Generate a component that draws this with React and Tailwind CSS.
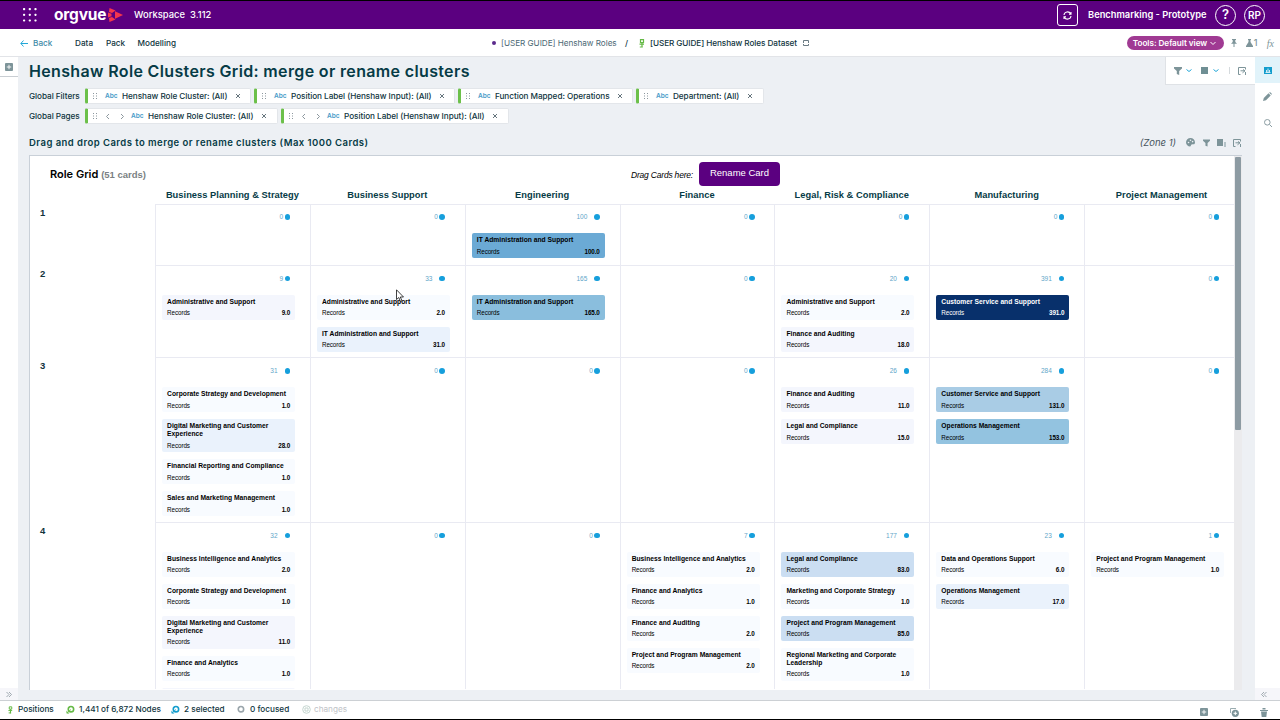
import React from "react";

const P = {
  0: "bg-[#f8fbff]",
  1: "bg-[#f4f6fd]",
  2: "bg-[#eaf2fc]",
  3: "bg-[#cbdef2]",
  4: "bg-[#a9cce5]",
  5: "bg-[#93c3e0]",
  6: "bg-[#8abedd]",
  7: "bg-[#6baad5]",
  8: "bg-[#08306b] text-white",
};

const columns = ["Business Planning & Strategy", "Business Support", "Engineering", "Finance", "Legal, Risk & Compliance", "Manufacturing", "Project Management"];

const rows = [
  {
    id: "1", h: "h-[60.5px]", pad: "pt-[28px]",
    cells: [["0"], ["0"], ["100", ["IT Administration and Support", "100.0", 7]], ["0"], ["0"], ["0"], ["0"]],
  },
  {
    id: "2", h: "h-[92.5px]", pad: "pt-[29px]",
    cells: [
      ["9", ["Administrative and Support", "9.0", 1]],
      ["33", ["Administrative and Support", "2.0", 0], ["IT Administration and Support", "31.0", 2]],
      ["165", ["IT Administration and Support", "165.0", 6]],
      ["0"],
      ["20", ["Administrative and Support", "2.0", 0], ["Finance and Auditing", "18.0", 1]],
      ["391", ["Customer Service and Support", "391.0", 8]],
      ["0"],
    ],
  },
  {
    id: "3", h: "h-[164.5px]", pad: "pt-[29px]",
    cells: [
      ["31", ["Corporate Strategy and Development", "1.0", 0], ["Digital Marketing and Customer Experience", "28.0", 2], ["Financial Reporting and Compliance", "1.0", 0], ["Sales and Marketing Management", "1.0", 0]],
      ["0"], ["0"], ["0"],
      ["26", ["Finance and Auditing", "11.0", 1], ["Legal and Compliance", "15.0", 1]],
      ["284", ["Customer Service and Support", "131.0", 4], ["Operations Management", "153.0", 5]],
      ["0"],
    ],
  },
  {
    id: "4", h: "h-[167.5px]", pad: "pt-[29px]",
    cells: [
      ["32", ["Business Intelligence and Analytics", "2.0", 0], ["Corporate Strategy and Development", "1.0", 0], ["Digital Marketing and Customer Experience", "11.0", 1], ["Finance and Analytics", "1.0", 0], null],
      ["0"], ["0"],
      ["7", ["Business Intelligence and Analytics", "2.0", 0], ["Finance and Analytics", "1.0", 0], ["Finance and Auditing", "2.0", 0], ["Project and Program Management", "2.0", 0]],
      ["177", ["Legal and Compliance", "83.0", 3], ["Marketing and Corporate Strategy", "1.0", 0], ["Project and Program Management", "85.0", 3], ["Regional Marketing and Corporate Leadership", "1.0", 0]],
      ["23", ["Data and Operations Support", "6.0", 0], ["Operations Management", "17.0", 2]],
      ["1", ["Project and Program Management", "1.0", 0]],
    ],
  },
];

function Card({ data }) {
  if (!data) return <div className="h-[25px] w-[133px] rounded-[2px] bg-[#f4f6fd]" />;
  const [title, value, tone] = data;
  return (
    <div className={`mb-[7px] w-[133px] shrink-0 rounded-[2px] px-[5px] pt-[3px] pb-[3px] text-[6.7px] leading-[8px] ${P[tone]}`}>
      <div className="w-[124px] font-bold tracking-[0.02px]">{title}</div>
      <div className="mt-[4px] flex h-[7px] items-center justify-between text-[6.300px]">
        <span className="tracking-[-0.1px]">Records</span>
        <span className="font-bold tracking-[-0.1px]">{value}</span>
      </div>
    </div>
  );
}

function Cell({ data: [count, ...cards], pad }) {
  return (
    <div className={`w-[154.85px] shrink-0 overflow-hidden border-t border-l border-[#e9eaf2] pl-[6.1px] ${pad} h-full`}>
      <div className="-mt-[22px] mb-[10px] flex h-[12px] w-[128px] items-center justify-end text-[6.5px] text-[#5fa6c9]">
        <span className={count.length > 1 ? "mr-[7px]" : "mr-[1.5px]"}>{count}</span>
        <span className="h-[5.5px] w-[5.5px] rounded-full bg-[#169fdc]" />
      </div>
      {cards.map((c, i) => <Card key={i} data={c} />)}
    </div>
  );
}

const Dots = () => (
  <svg className="h-[6px] w-[4px] shrink-0" viewBox="0 0 4 6" fill="#8c979e">
    <path d="M0 0h1v1H0zM3 0h1v1H3zM0 2.4h1v1H0zM3 2.4h1v1H3zM0 5h1v1H0zM3 5h1v1H3z" />
  </svg>
);
const Close = () => (
  <svg className="h-[4px] w-[4px] shrink-0" viewBox="0 0 4 4" stroke="#66757d" strokeWidth="1"><path d="M0 0l4 4M4 0L0 4" /></svg>
);
const Chev = ({ d, c = "#8c979e" }) => (
  <svg className="h-[5px] w-[6px] shrink-0" viewBox="0 0 6 5" fill="none" stroke={c} strokeWidth="1"><path d={d} /></svg>
);

function Chip({ w, label, labelW, pager, gap = "ml-[8px]" }) {
  return (
    <div className={`flex h-[16px] shrink-0 items-center rounded-[2px] border-y border-r border-l-[3px] border-[#e3e6ea] border-l-[#6cc04a] bg-white pl-[5px] ${w}`}>
      <Dots />
      {pager && <span className="ml-[8px] flex w-[20px] justify-between"><Chev d="M4 0L1.5 2.5L4 5" /><Chev d="M2 0L4.500 2.500L2 5" /></span>}
      <span className={`${pager ? "ml-[6px]" : "ml-[8px]"} w-[12px] pt-px text-[6.5px] font-semibold text-[#4a9cc9]`}>Abc</span>
      <span className={`ml-[5px] text-[8.2px] font-medium tracking-[-0.05px] whitespace-nowrap text-[#0f3540] ${labelW}`}>{label}</span>
      <span className={gap}><Close /></span>
    </div>
  );
}

const Funnel = ({ c = "h-[8px] w-[8px]" }) => (
  <svg className={`shrink-0 ${c}`} viewBox="0 0 8 8" fill="#7d9499"><path d="M0 0h8v1.500L5.200 4v4L2.800 7V4L0 1.500z" /></svg>
);
const Export = () => (
  <svg className="h-[8px] w-[8px] shrink-0" viewBox="0 0 8 8" fill="none" stroke="#7d9499" strokeWidth="1"><path d="M7.500 2.500V.5h-7v7h2M2.500 3.800h4.500M5 2.500l2 1.300-2.500 2M7.500 5v3" /></svg>
);
const PlusBox = ({ s = "h-[9px] w-[9px]" }) => (
  <svg className={`shrink-0 ${s}`} viewBox="0 0 9 9"><rect width="9" height="9" rx="1" fill="#7d9499" /><path d="M4.500 2v5M2 4.500h5" stroke="#fff" /></svg>
);
const Ring = ({ c, arrow = true }) => (
  <svg className="h-[9px] w-[9px] shrink-0" viewBox="0 0 10 10" fill="none" stroke={c}>
    <circle cx="5.500" cy="4.700" r="3" strokeWidth="1.800" />
    {arrow && <path d="M1 9l4.500-4M1 6.500V9h2.500" strokeWidth="1" />}
  </svg>
);
const Person = ({ c = "h-[9px] w-[6px]" }) => (
  <svg className={`shrink-0 ${c}`} viewBox="0 0 6 9" fill="none" stroke="#65b946" strokeWidth="1.200"><path d="M1.500 3.500V.7h3v2.800zM3 3.500v5M.5 5.200H5M.8 8h3" /></svg>
);

export default function App() {
  return (
    <div className="flex h-[720px] w-[1280px] flex-col overflow-hidden border-t border-b border-black bg-white font-['Inter',sans-serif] text-[8.2px] text-[#0f3540]">
      <header className="flex h-[28px] shrink-0 items-center bg-[#5b0080] pl-[23px] text-white">
        <svg className="h-[14px] w-[14px]" viewBox="0 0 14 14" fill="#fff">
          {[0, 5.7, 11.4].map((y) => [0, 5.7, 11.4].map((x) => <rect key={`${x}-${y}`} x={x} y={y} width="2.200" height="2.200" rx=".8" />))}
        </svg>
        <span className="ml-[17px] w-[52px] text-[15.500px] leading-[18px] font-bold tracking-[-0.2px]">orgvue</span>
        <svg className="ml-[2px] h-[14px] w-[15px]" viewBox="0 0 15 14" fill="#f4364c">
          <path d="M7 3.200L15 7l-8 3.800zM1.500 0L7.500 2.500 4 5 1 4zM0 4.500l3.500 1.300v2.400L0 9.500zM1.500 14L1 10l3-1 3.500 2.500z" />
        </svg>
        <span className="ml-[11px] w-[78px] text-[9.400px] font-medium tracking-[0.02px] whitespace-pre">Workspace  3.112</span>
        <div className="ml-auto flex items-center">
          <span className="flex h-[22px] w-[21px] items-center justify-center rounded-[3px] border border-white">
            <svg className="h-[9px] w-[9px]" viewBox="0 0 9 9" fill="none" stroke="#fff" strokeWidth="1.100"><path d="M1 4a3.500 3.500 0 0 1 6.600-1.200M8 5a3.500 3.500 0 0 1-6.600 1.200M8 1v2.200H6M1 8V5.800h2" /></svg>
          </span>
          <span className="ml-[10px] w-[118px] text-[9.300px] font-semibold whitespace-nowrap">Benchmarking - Prototype</span>
          <span className="ml-[9px] flex h-[21px] w-[21px] items-center justify-center rounded-full border border-white text-[13px] font-semibold">?</span>
          <span className="mr-[15px] ml-[8px] flex h-[21px] w-[21px] items-center justify-center rounded-full border border-white text-[10px] font-semibold">RP</span>
        </div>
      </header>

      <nav className="flex h-[28px] shrink-0 items-center border-b border-[#e2e4e8] bg-white pt-px font-medium">
        <svg className="ml-[20px] h-[7px] w-[8px]" viewBox="0 0 8 7" fill="none" stroke="#22a7d8"><path d="M8 3.500H1M3.500 .5L.8 3.500l2.700 3" /></svg>
        <span className="ml-[5px] w-[42px] text-[#3f8ba8]">Back</span>
        <span className="w-[31px]">Data</span>
        <span className="w-[31.500px]">Pack</span>
        <span className="w-[354.500px]">Modelling</span>
        <span className="h-[4px] w-[4px] rounded-full bg-[#5b2a8c]" />
        <span className="ml-[5px] w-[124px] font-normal tracking-[-0.05px] whitespace-nowrap text-[#4d6975]">[USER GUIDE] Henshaw Roles</span>
        <span className="w-[14px]">/</span>
        <Person c="h-[9px] w-[6px]" />
        <span className="ml-[5px] w-[153px] tracking-[-0.08px] whitespace-nowrap">[USER GUIDE] Henshaw Roles Dataset</span>
        <svg className="h-[6px] w-[6px]" viewBox="0 0 6 6" fill="none" stroke="#6b7b84"><path d="M.5 3V.5h5V3M5.500 4v1.500h-5V4" /></svg>
        <div className="mr-[6px] ml-auto flex items-center text-[#7d9499]">
          <span className="flex h-[14px] w-[97px] items-center rounded-full bg-[#a03a93] pl-[6px] font-semibold tracking-[-0.05px] whitespace-nowrap text-white">
            <span className="w-[77px]">Tools: Default view</span>
            <Chev d="M.5 1L3 3.500L5.500 1" c="#fff" />
          </span>
          <svg className="ml-[7px] h-[8px] w-[6px]" viewBox="0 0 6 8" fill="#7d9499"><path d="M1 0h4v1H4.300v2L6 4.800H3.500V8h-1V4.800H0L1.700 3V1H1z" /></svg>
          <svg className="ml-[9px] h-[8px] w-[7px]" viewBox="0 0 7 8" fill="#7d9499"><path d="M2 0h3v1h-.5v2L7 7v1H0V7l2.500-4V1H2z" /></svg>
          <span className="ml-px w-[6px] text-[9px]">1</span>
          <span className="ml-[7px] font-['Liberation_Serif',serif] text-[10px] italic">fx</span>
        </div>
      </nav>

      <div className="flex h-[643px] shrink-0 bg-[#edf0f4]">
        <aside className="flex w-[18px] shrink-0 flex-col items-center justify-between bg-white">
          <div className="flex h-[20px] w-full items-center justify-center border-b border-[#c9ced3]"><PlusBox s="h-[8px] w-[8px]" /></div>
          <div className="flex h-[12px] w-full items-center justify-center bg-[#f6f6fa]">
            <svg className="h-[5px] w-[6px]" viewBox="0 0 6 5" fill="none" stroke="#8c979e" strokeWidth=".8"><path d="M.5 0L3 2.500.5 5M3 0l2.500 2.500L3 5" /></svg>
          </div>
        </aside>

        <main className="flex w-[1237px] shrink-0 flex-col pl-[11px]">
          <div className="flex h-[31px] shrink-0 items-start justify-between">
            <h1 className="pt-[4px] text-[16px] leading-[20px] font-semibold tracking-[0.35px] text-[#063b46]">Henshaw Role Clusters Grid: merge or rename clusters</h1>
            <div className="flex h-[28px] w-[90px] items-center border-b border-l border-[#dfe2e6] bg-white pl-[8px]">
              <Funnel />
              <span className="ml-[4px]"><Chev d="M.5 1.500L3 3.500L5.500 1.500" c="#22a7d8" /></span>
              <span className="ml-[9px] h-[7px] w-[7px] bg-[#6f8f94]" />
              <span className="ml-[5px]"><Chev d="M.5 1.500L3 3.500L5.500 1.500" c="#22a7d8" /></span>
              <span className="mr-[8px] ml-[10px] h-[7px] w-px bg-[#d5dadd]" />
              <Export />
            </div>
          </div>
          <div className="flex h-[16px] shrink-0 items-center">
            <span className="w-[56px] font-medium tracking-[-0.05px] whitespace-nowrap">Global Filters</span>
            <div className="flex gap-[3px]">
              <Chip w="w-[166px]" label="Henshaw Role Cluster: (All)" labelW="w-[106px]" />
              <Chip w="w-[201px]" label="Position Label (Henshaw Input): (All)" labelW="w-[141px]" />
              <Chip w="w-[175px]" label="Function Mapped: Operations" labelW="w-[115px]" />
              <Chip w="w-[128px]" label="Department: (All)" labelW="w-[67px]" />
            </div>
          </div>
          <div className="mt-[4px] flex h-[16px] shrink-0 items-center">
            <span className="w-[56px] font-medium tracking-[-0.05px] whitespace-nowrap">Global Pages</span>
            <div className="flex gap-[3px]">
              <Chip pager w="w-[193px]" label="Henshaw Role Cluster: (All)" labelW="w-[106px]" />
              <Chip pager w="w-[228px]" label="Position Label (Henshaw Input): (All)" labelW="w-[141px]" />
            </div>
          </div>
          <div className="flex h-[31px] shrink-0 items-center pt-[6px] pr-[14px]">
            <h2 className="pt-[2px] text-[9.500px] font-semibold tracking-[0.46px] text-[#063b46]">Drag and drop Cards to merge or rename clusters (Max 1000 Cards)</h2>
            <span className="ml-auto pt-[2px] text-[9.500px] text-[#45545c] italic">(Zone 1)</span>
            <svg className="ml-[10px] h-[9px] w-[9px]" viewBox="0 0 9 9"><path d="M4.500 0A4.500 4.500 0 0 0 0 4.500C0 6.500 2 8.500 4 8.500c1.200 0 .5-1.500 1.500-2 1-.4 3.500.5 3.500-2A4.500 4.500 0 0 0 4.500 0z" fill="#7d9499" /><circle cx="2.500" cy="4.500" r=".8" fill="#edf0f4" /><circle cx="4.500" cy="2.300" r=".8" fill="#edf0f4" /><circle cx="6.600" cy="3.600" r=".8" fill="#edf0f4" /></svg>
            <span className="ml-[8px]"><Funnel c="h-[8px] w-[7px]" /></span>
            <svg className="ml-[7px] h-[8px] w-[9px]" viewBox="0 0 9 8" fill="#7d9499"><path d="M0 0h6v7H0zM7.500 3h1v5h-1z" /></svg>
            <span className="ml-[7px]"><Export /></span>
          </div>

          <section className="flex h-[535px] w-[1213px] shrink-0 overflow-hidden border-t border-l border-[#c9d0d8] bg-white font-['Liberation_Sans',sans-serif] text-black">
            <div className="w-[1204px] shrink-0 overflow-hidden">
              <div className="flex h-[33px] items-center pt-[3px] pl-[20px]">
                <span className="w-[581px] font-['Inter',sans-serif] text-[11px] font-semibold">Role Grid <span className="font-['Liberation_Sans',sans-serif] text-[9.500px] font-bold text-[#7a7f83]">(51 cards)</span></span>
                <span className="w-[68px] pt-[2px] text-[8.500px] tracking-[-0.2px] whitespace-nowrap italic">Drag Cards here:</span>
                <span className="flex h-[24px] w-[81px] items-center justify-center rounded-[4px] bg-[#5b0080] pb-px text-[9.500px] whitespace-nowrap text-white">Rename Card</span>
              </div>
              <div className="flex h-[15px] items-start pl-[125px] text-[9.300px] leading-[12px] font-bold text-[#063b46]">
                {columns.map((c) => <div key={c} className="w-[154.85px] shrink-0 text-center tracking-[0.03px] whitespace-nowrap">{c}</div>)}
              </div>
              {rows.map((r) => (
                <div key={r.id} className={`flex ${r.h}`}>
                  <div className="w-[125px] shrink-0 pt-[3px] pl-[10px] text-[9.500px] leading-[11px] font-bold text-[#12333c]">{r.id}</div>
                  {r.cells.map((c, i) => <Cell key={i} data={c} pad={r.pad} />)}
                </div>
              ))}
            </div>
            <div className="flex w-[8px] shrink-0 bg-[#ebebed]">
              <div className="ml-px mt-px h-[273px] w-[6px] rounded-[1px] bg-[#8d9ba3]" />
            </div>
          </section>
        </main>

        <aside className="flex w-[25px] shrink-0 flex-col items-center bg-white">
          <div className="flex h-[26px] w-full items-center justify-center bg-[#e1f3fa]">
            <svg className="h-[7px] w-[8px]" viewBox="0 0 8 7"><rect width="8" height="7" fill="#139dcd" /><path d="M1.500 5.500h5M2.500 5V3M4 5V1.500M5.500 5V3" stroke="#fff" strokeWidth=".8" /></svg>
          </div>
          <svg className="mt-[9px] h-[9px] w-[9px]" viewBox="0 0 9 9" fill="#7d9499"><path d="M0 9l.8-3L5.500 1.300l2.200 2.200L3 8.200zM6.200.7L7 0l2 2-.7.800z" /></svg>
          <svg className="mt-[18px] h-[8px] w-[8px]" viewBox="0 0 8 8" fill="none" stroke="#8b9da3"><circle cx="3.300" cy="3.300" r="2.800" /><path d="M5.500 5.500L8 8" /></svg>
          <div className="mt-auto flex h-[12px] w-full items-center bg-[#f6f6fa] pl-[6px]">
            <svg className="h-[5px] w-[6px]" viewBox="0 0 6 5" fill="none" stroke="#8c979e" strokeWidth=".8"><path d="M3 0L.5 2.500 3 5M5.500 0L3 2.500 5.500 5" /></svg>
          </div>
        </aside>
      </div>

      <footer className="flex h-[19px] shrink-0 items-center border-t border-[#ccd0d4] bg-white pb-px pl-[8px] font-medium">
        <Person c="h-[8px] w-[5px]" />
        <span className="ml-[5px] w-[48px]">Positions</span>
        <Ring c="#65b946" />
        <span className="ml-[4px] w-[92px] whitespace-nowrap">1,441 of 6,872 Nodes</span>
        <Ring c="#139dcd" />
        <span className="ml-[4px] w-[52px] whitespace-nowrap">2 selected</span>
        <Ring c="#9aa5ab" arrow={false} />
        <span className="ml-[5px] w-[52px] whitespace-nowrap">0 focused</span>
        <svg className="h-[9px] w-[9px]" viewBox="0 0 9 9" fill="none" stroke="#c4d5cf"><circle cx="4.500" cy="4.500" r="3.800" /><path d="M3 6V3h3v3z" /></svg>
        <span className="ml-[3px] font-normal text-[#bfc4c8]">changes</span>
        <div className="mr-[12px] ml-auto flex items-center pt-[5px]">
          <PlusBox s="h-[8px] w-[8px]" />
          <svg className="ml-[22px] h-[9px] w-[9px]" viewBox="0 0 9 9"><path d="M.5 5V.5H6" fill="none" stroke="#9aacb0" /><circle cx="5.300" cy="5.300" r="3.600" fill="#7d9499" /><path d="M5.300 3.500v3.600M3.500 5.300h3.600" stroke="#fff" /></svg>
          <svg className="ml-[21px] h-[9px] w-[8px]" viewBox="0 0 8 9" fill="#7d9499"><path d="M1 3.500h6L6.300 9H1.700zM0 2h8v1H0zM2.500 0h3v1.500h-3z" /></svg>
        </div>
      </footer>

      <svg className="absolute top-[289px] left-[396px] h-[14px] w-[9px]" viewBox="0 0 9 14" fill="#fff" stroke="#111" strokeWidth=".8"><path d="M.5.800v9.700l2.300-2 1.700 4 1.500-.7-1.700-3.800h3.200z" /></svg>
    </div>
  );
}
